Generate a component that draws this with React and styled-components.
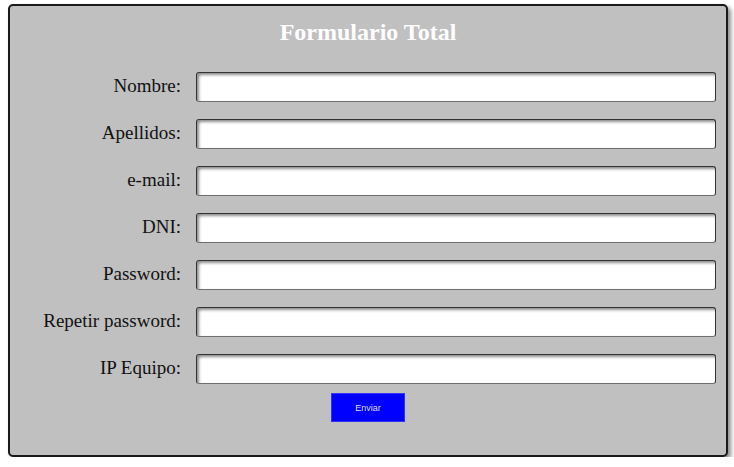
import React from "react";
import styled, { createGlobalStyle } from "styled-components";

const GlobalStyle = createGlobalStyle`
  body {
    margin: 0;
    padding: 4px 6px 0 8px;
    background: #ffffff;
    font-family: "Liberation Serif", "Times New Roman", serif;
  }
`;

const Panel = styled.form`
  box-sizing: border-box;
  width: 720px;
  height: 453px;
  background: #c0c0c0;
  border: 2px solid #1a1a1a;
  border-radius: 5px;
  box-shadow: 3px 3px 4px rgba(0, 0, 0, 0.45);
  padding-top: 12px;
  display: flex;
  flex-direction: column;
`;

const Title = styled.h1`
  margin: 0 0 26px;
  text-align: center;
  font-size: 24px;
  line-height: 28px;
  font-weight: bold;
  color: #ffffff;
`;

const Fields = styled.div`
  display: grid;
  grid-template-columns: 171px 520px;
  column-gap: 15px;
  row-gap: 17px;
  align-items: center;
  padding-right: 10px;
`;

const Label = styled.label`
  text-align: right;
  font-size: 19px;
  line-height: 22px;
  color: #111;
  padding-bottom: 3px;
`;

const Input = styled.input`
  box-sizing: border-box;
  height: 30px;
  width: 100%;
  margin: 0;
  background: #ffffff;
  border: 1px solid #333;
  border-bottom-color: #6f6f6f;
  border-radius: 3px;
  box-shadow: inset 2px 2px 3px rgba(0, 0, 0, 0.45);
  outline: none;
`;

const Actions = styled.div`
  display: flex;
  justify-content: center;
  padding-top: 9px;
`;

const Button = styled.button`
  width: 74px;
  height: 29px;
  background: #0000ff;
  border: 1px solid #3030ff;
  color: #dcdcff;
  font-family: "Liberation Sans", Arial, sans-serif;
  font-size: 9px;
`;

const fields = [
  { id: "nombre", label: "Nombre:" },
  { id: "apellidos", label: "Apellidos:" },
  { id: "email", label: "e-mail:" },
  { id: "dni", label: "DNI:" },
  { id: "password", label: "Password:", type: "password" },
  { id: "repetir", label: "Repetir password:", type: "password" },
  { id: "ip", label: "IP Equipo:" },
];

export default function App() {
  return (
    <>
      <GlobalStyle />
      <Panel onSubmit={(e) => e.preventDefault()}>
        <Title>Formulario Total</Title>
        <Fields>
          {fields.map((f) => (
            <React.Fragment key={f.id}>
              <Label htmlFor={f.id}>{f.label}</Label>
              <Input id={f.id} type={f.type || "text"} />
            </React.Fragment>
          ))}
        </Fields>
        <Actions>
          <Button type="submit">Enviar</Button>
        </Actions>
      </Panel>
    </>
  );
}
